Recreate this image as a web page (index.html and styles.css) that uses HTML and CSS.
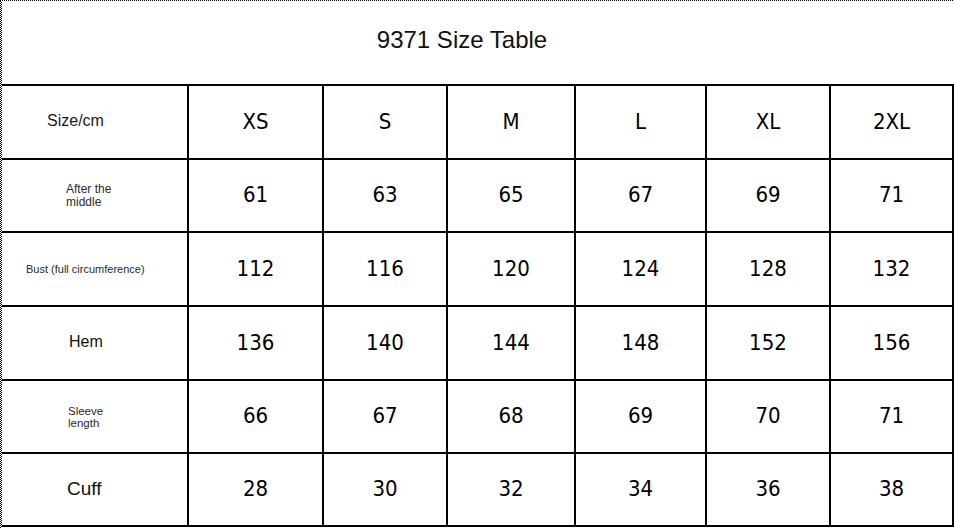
FILE: index.html
```html
<!DOCTYPE html>
<html>
<head>
<meta charset="utf-8">
<link rel="stylesheet" href="styles.css">
</head>
<body>
<div class="frame">
  <div class="title">9371 Size Table</div>
  <div class="grid">
    <div class="cell lbl lbl-size">Size/cm</div>
    <div class="cell num">XS</div>
    <div class="cell num">S</div>
    <div class="cell num">M</div>
    <div class="cell num">L</div>
    <div class="cell num">XL</div>
    <div class="cell num">2XL</div>

    <div class="cell lbl lbl-after">After the<br>middle</div>
    <div class="cell num">61</div>
    <div class="cell num">63</div>
    <div class="cell num">65</div>
    <div class="cell num">67</div>
    <div class="cell num">69</div>
    <div class="cell num">71</div>

    <div class="cell lbl lbl-bust">Bust (full circumference)</div>
    <div class="cell num">112</div>
    <div class="cell num">116</div>
    <div class="cell num">120</div>
    <div class="cell num">124</div>
    <div class="cell num">128</div>
    <div class="cell num">132</div>

    <div class="cell lbl lbl-hem">Hem</div>
    <div class="cell num">136</div>
    <div class="cell num">140</div>
    <div class="cell num">144</div>
    <div class="cell num">148</div>
    <div class="cell num">152</div>
    <div class="cell num">156</div>

    <div class="cell lbl lbl-sleeve">Sleeve<br>length</div>
    <div class="cell num">66</div>
    <div class="cell num">67</div>
    <div class="cell num">68</div>
    <div class="cell num">69</div>
    <div class="cell num">70</div>
    <div class="cell num">71</div>

    <div class="cell lbl lbl-cuff">Cuff</div>
    <div class="cell num">28</div>
    <div class="cell num">30</div>
    <div class="cell num">32</div>
    <div class="cell num">34</div>
    <div class="cell num">36</div>
    <div class="cell num">38</div>
  </div>
</div>
</body>
</html>
```

FILE: styles.css
```css
html, body {
  margin: 0;
  padding: 0;
  background: #fff;
}

.frame {
  width: 954px;
  height: 528px;
  box-sizing: border-box;
  padding-top: 1px;
  padding-left: 2px;
  background-color: #fff;
  background-image:
    linear-gradient(90deg, #000 50%, #fff 50%),
    conic-gradient(#000 0 25%, #fff 0 50%, #000 0 75%, #fff 0);
  background-size: 2px 1px, 2px 2px;
  background-repeat: repeat-x, repeat-y;
  background-position: 0 0, 0 0;
  overflow: hidden;
}

.title {
  height: 83px;
  box-sizing: border-box;
  padding-bottom: 5px;
  padding-right: 32px;
  display: flex;
  align-items: center;
  justify-content: center;
  font-family: "Liberation Sans", Arial, sans-serif;
  font-size: 24px;
  color: #111;
  background: #fff;
}

.grid {
  display: grid;
  grid-template-columns: 185px 133px 122px 126px 129px 122px 121px;
  grid-template-rows: 72px 71px 72px 72px 71px 71px;
  gap: 2px;
  padding: 2px 2px 2px 0;
  background: #000;
  width: 952px;
  box-sizing: border-box;
}

.cell {
  background: #fff;
  display: flex;
  align-items: center;
}

.num {
  justify-content: center;
  font-family: "DejaVu Sans Condensed", "DejaVu Sans", sans-serif;
  font-stretch: condensed;
  font-size: 22px;
  color: #000;
  padding-bottom: 2px;
  box-sizing: border-box;
}

.lbl {
  justify-content: flex-start;
  font-family: "Liberation Sans", Arial, sans-serif;
  box-sizing: border-box;
}

.lbl-size {
  padding-left: 45px;
  font-size: 16px;
  color: #1a1a1a;
  padding-bottom: 3px;
}

.lbl-after {
  padding-left: 64px;
  font-size: 12px;
  line-height: 13px;
  color: #2a2a2a;
}

.lbl-bust {
  padding-left: 24px;
  font-size: 11px;
  color: #2a2a2a;
  padding-bottom: 1px;
}

.lbl-hem {
  padding-left: 67px;
  font-size: 16px;
  color: #111;
  padding-bottom: 2px;
}

.lbl-sleeve {
  padding-left: 66px;
  font-size: 11.5px;
  line-height: 12px;
  color: #2a2a2a;
}

.lbl-cuff {
  padding-left: 65px;
  font-size: 19px;
  color: #111;
  padding-bottom: 2px;
}
```
